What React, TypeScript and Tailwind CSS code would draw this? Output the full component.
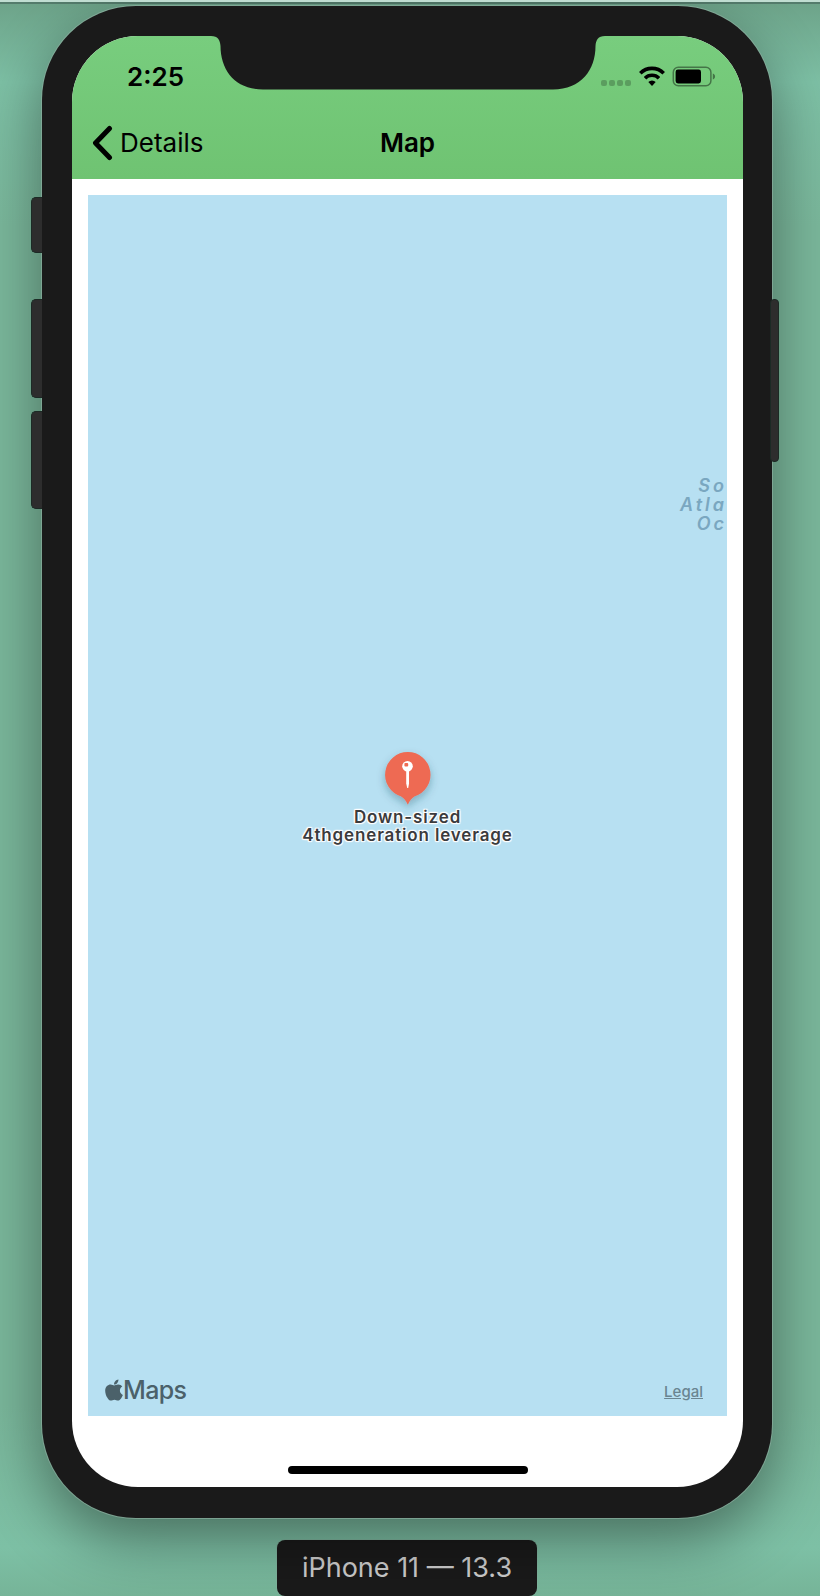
import { FaApple } from "react-icons/fa";

function StatusIcons() {
  return (
    <svg width="116" height="24" viewBox="0 0 116 24" role="img" aria-label="Signal, Wi-Fi and battery">
      <g fill="#000" fillOpacity="0.22">
        <rect x="0" y="14" width="6" height="6" rx="2" />
        <rect x="8" y="14" width="6" height="6" rx="2" />
        <rect x="16" y="14" width="6" height="6" rx="2" />
        <rect x="24" y="14" width="6" height="6" rx="2" />
      </g>
      <g fill="none" stroke="#000" strokeWidth="3.6">
        <path d="M39.3 7.2a16.6 16.6 0 0 1 23.4 0" />
        <path d="M44 12.2a9.900 9.900 0 0 1 14 0" />
      </g>
      <path d="M47.3 16a5.2 5.2 0 0 1 7.400 0L51 20.100z" fill="#000" />
      <rect x="72.300" y="1.2" width="37.6" height="18.6" rx="5" fill="none" stroke="#000" strokeOpacity="0.42" strokeWidth="1.5" />
      <rect x="74.600" y="3.500" width="25.4" height="14" rx="2.4" fill="#000" />
      <path d="M111.800 7.500c3 1 3 5 0 6z" fill="#000" fillOpacity="0.42" />
    </svg>
  );
}

function Notch() {
  return (
    <svg className="absolute left-1/2 top-0 -translate-x-1/2" width="394" height="54" viewBox="0 0 394 54" aria-hidden="true">
      <path
        d="M0 0H394C387 0 385 4 384.500 10C384.500 34 370 53.500 342 53.500H52C24 53.500 9.500 34 9.500 10C9 4 7 0 0 0Z"
        fill="#1a1a1a"
      />
    </svg>
  );
}

function Pin() {
  return (
    <svg width="62" height="64" viewBox="0 0 62 64" className="overflow-visible" role="img" aria-label="Map pin">
      <defs>
        <filter id="pinShadow" x="-30%" y="-30%" width="160%" height="170%">
          <feDropShadow dx="0" dy="4" stdDeviation="4" floodColor="#24495a" floodOpacity="0.35" />
        </filter>
      </defs>
      <path
        d="M31 2A22.700 22.700 0 0 1 38 46.300C35 48 33 50.500 31 54.800C29 50.500 27 48 24 46.300A22.700 22.700 0 0 1 31 2Z"
        fill="#ee6a52"
        filter="url(#pinShadow)"
      />
      <circle cx="30.700" cy="16.200" r="5.300" fill="#fff" />
      <rect x="27.600" y="13" width="3.800" height="3.600" rx="1" fill="#ee6a52" />
      <path d="M29.400 20h2.800v13.500L31.400 38h-1L29.400 33.500z" fill="#fff" />
    </svg>
  );
}

function MapView() {
  return (
    <section aria-label="Map" className="relative flex flex-1 flex-col justify-end overflow-hidden bg-[#b7e0f2]">
      <p className="absolute right-0 top-[281px] text-right text-[18px] font-semibold italic leading-[19px] tracking-[3px] text-[#7aa7c0]">
        So
        <br />
        Atla
        <br />
        Oc
      </p>
      <div className="absolute left-1/2 top-[555px] flex -translate-x-1/2 flex-col items-center">
        <Pin />
        <p className="-mt-[6px] whitespace-nowrap text-center text-[17px] font-semibold leading-[18px] tracking-wider text-[#3b3b3d] [text-shadow:0_0_2px_#fff,0_0_2px_#fff,1px_1px_1px_#fff,-1px_-1px_1px_#fff,1px_-1px_1px_#fff,-1px_1px_1px_#fff]">
          Down-sized
          <br />
          4thgeneration leverage
        </p>
      </div>
      <div className="flex items-center justify-between pb-3 pl-[17px] pr-6">
        <span className="flex items-center text-[25px] font-medium leading-7 tracking-tight text-[#4b616a]">
          <FaApple className="h-6 w-[18px]" aria-hidden="true" />
          Maps
        </span>
        <a href="#legal" className="pt-1 text-[15px] font-medium leading-5 text-[#6a8591] underline">
          Legal
        </a>
      </div>
    </section>
  );
}

export default function App() {
  return (
    <main className="flex min-h-screen flex-col items-center overflow-hidden border-t-2 border-[#c0ddd1] bg-[linear-gradient(180deg,#6da389_0%,#7dc0a5_5%,#7ab79b_14%,#7ab79b_88%,#7dc0a5_97%,#76b498_100%)] pl-[42px] pr-[48px] font-['Inter',sans-serif]">
      <div className="-mx-12 h-[2px] w-[calc(100vw+48px)] shrink-0 self-start bg-[#547c6c]" />
      <div className="relative mt-[2px] flex w-full flex-1 flex-col rounded-[94px] bg-[#1a1a1a] pb-[31px] pl-[30px] pr-[29px] pt-[30px] shadow-[0_0_0_1px_rgba(140,175,160,0.7),0_22px_60px_rgba(0,0,0,0.42)]">
        <div className="absolute -left-[11px] top-[191px] h-[56px] w-[11px] rounded-l-[5px] border border-r-0 border-[#1c2a25] bg-[#2d2d2d]" />
        <div className="absolute -left-[11px] top-[293px] h-[99px] w-[11px] rounded-l-[5px] border border-r-0 border-[#1c2a25] bg-[#2d2d2d]" />
        <div className="absolute -left-[11px] top-[405px] h-[98px] w-[11px] rounded-l-[5px] border border-r-0 border-[#1c2a25] bg-[#2d2d2d]" />
        <div className="absolute -right-[7px] top-[293px] h-[163px] w-[9px] rounded-[4px] border border-[#1c2a25] bg-[#2d2d2d]" />

        <div className="relative flex flex-1 flex-col overflow-hidden rounded-[66px] bg-white">
          <header className="flex h-[143px] flex-col bg-linear-to-b from-[#78cd7e] to-[#6fc372]">
            <Notch />
            <div className="flex items-start justify-between pl-[55px] pr-[26px] pt-[27px]">
              <time className="text-[26px] font-semibold leading-7">2:25</time>
              <span className="pt-[3px]">
                <StatusIcons />
              </span>
            </div>
            <div className="mt-[34px] grid grid-cols-[1fr_auto_1fr] items-center">
              <button type="button" className="flex items-center gap-[7px] pl-5 text-[26px] leading-9">
                <svg width="21" height="36" viewBox="0 0 21 36" fill="none" stroke="#000" strokeWidth="5" strokeLinecap="round" strokeLinejoin="round" aria-hidden="true">
                  <path d="M17.500 3.500L3.500 18L17.500 32.500" />
                </svg>
                Details
              </button>
              <h1 className="text-[26px] font-semibold leading-9">Map</h1>
            </div>
          </header>
          <div className="flex flex-1 flex-col px-4 pt-4">
            <MapView />
          </div>
          <footer className="flex h-[71px] items-end justify-center pb-[13px]">
            <div className="h-2 w-[240px] rounded-full bg-black" />
          </footer>
        </div>
      </div>
      <p className="mt-[22px] rounded-[8px] bg-[#1a1a1a] px-[25px] py-3 text-[27px] leading-8 text-[#cccccc] shadow-[0_0_0_1px_rgba(130,180,158,0.7)]">
        iPhone 11 — 13.3
      </p>
    </main>
  );
}
